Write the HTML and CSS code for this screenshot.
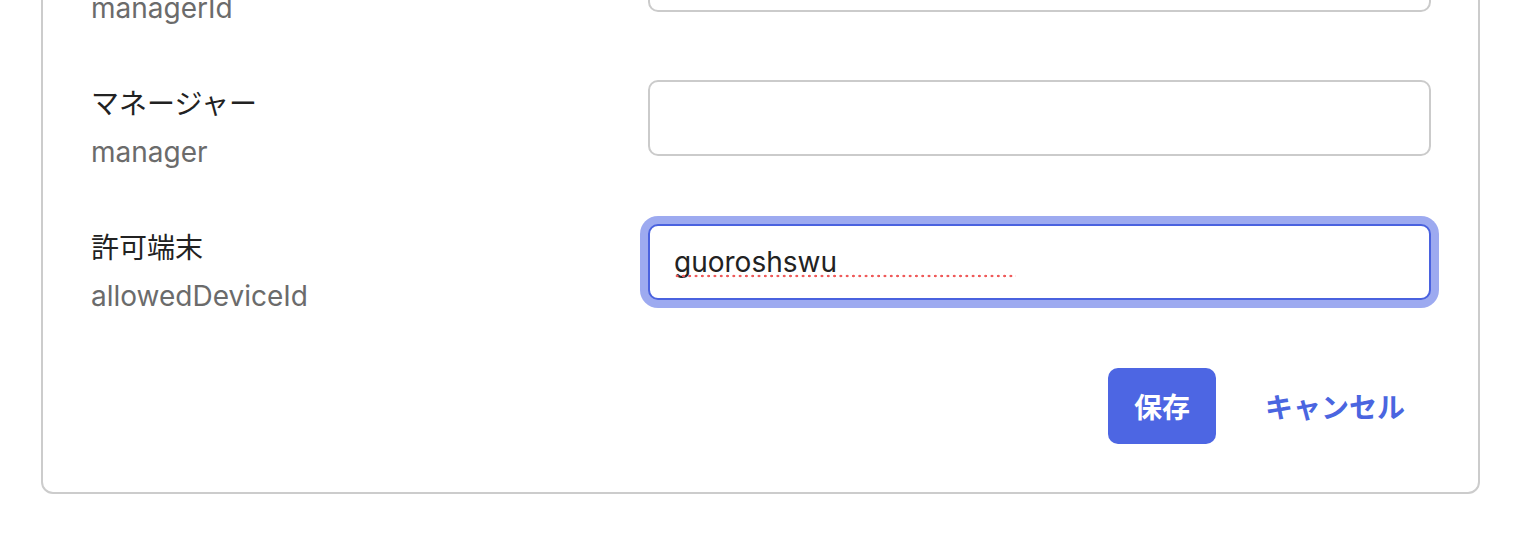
FILE: index.html
```html
<!DOCTYPE html>
<html lang="ja">
<head>
<meta charset="utf-8">
<title>編集</title>
<link rel="stylesheet" href="styles.css">
</head>
<body>
<div class="card">
  <div class="form">
    <div class="row">
      <div class="label">
        <div class="label-ja">マネージャーID</div>
        <div class="label-en">managerId</div>
      </div>
      <div class="field"><input class="input" type="text" value=""></div>
    </div>
    <div class="row">
      <div class="label">
        <div class="label-ja">マネージャー</div>
        <div class="label-en">manager</div>
      </div>
      <div class="field"><input class="input" type="text" value=""></div>
    </div>
    <div class="row">
      <div class="label">
        <div class="label-ja">許可端末</div>
        <div class="label-en">allowedDeviceId</div>
      </div>
      <div class="field">
        <input class="input is-focused" type="text" value="guoroshswu" spellcheck="false">
        <span class="spell-mark"></span>
      </div>
    </div>
    <div class="actions">
      <button class="btn btn-primary" type="button">保存</button>
      <button class="btn btn-link" type="button">キャンセル</button>
    </div>
  </div>
</div>
</body>
</html>
```

FILE: styles.css
```css
html, body {
  margin: 0;
  padding: 0;
  background: #ffffff;
}

body {
  font-family: "Inter", "Noto Sans CJK JP", sans-serif;
  color: #222222;
}

.card {
  box-sizing: border-box;
  width: 1439px;
  margin: -114px 0 0 41px;
  padding: 48px 47px 48px 48px;
  border: 2px solid #cccccc;
  border-radius: 12px;
  background: #ffffff;
}

.form {
  display: flex;
  flex-direction: column;
  gap: 52px;
}

.row {
  display: grid;
  grid-template-columns: 557px 1fr;
  align-items: start;
}

.label {
  padding-top: 4px;
  font-size: 28px;
}

.label-ja {
  line-height: 40px;
  color: #222222;
}

.label-en {
  margin-top: 8px;
  line-height: 40px;
  color: #6b6b6b;
}

.field {
  position: relative;
}

.input {
  display: block;
  box-sizing: border-box;
  width: 100%;
  height: 76px;
  margin: 0;
  padding: 0 24px;
  border: 2px solid #cbcbcb;
  border-radius: 10px;
  background: #ffffff;
  font-family: "Inter", "Noto Sans CJK JP", sans-serif;
  font-size: 28px;
  color: #222222;
  outline: none;
}

.input.is-focused {
  border-color: #4a62df;
  box-shadow: 0 0 0 8px #9daaf0;
}

.spell-mark {
  position: absolute;
  left: 26px;
  top: 50px;
  width: 342px;
  height: 4px;
  background-image: radial-gradient(circle, #ef5a5a 1.1px, transparent 1.6px);
  background-size: 6.3px 4px;
  background-repeat: repeat-x;
  pointer-events: none;
}

.actions {
  display: flex;
  justify-content: flex-end;
  gap: 23px;
}

.btn {
  height: 76px;
  padding: 0 26px;
  border: none;
  border-radius: 10px;
  font-family: "Inter", "Noto Sans CJK JP", sans-serif;
  font-size: 28px;
  font-weight: 700;
  cursor: pointer;
}

.btn-primary {
  background: #4d66e3;
  color: #ffffff;
}

.btn-link {
  background: transparent;
  color: #4a65e0;
}
```
